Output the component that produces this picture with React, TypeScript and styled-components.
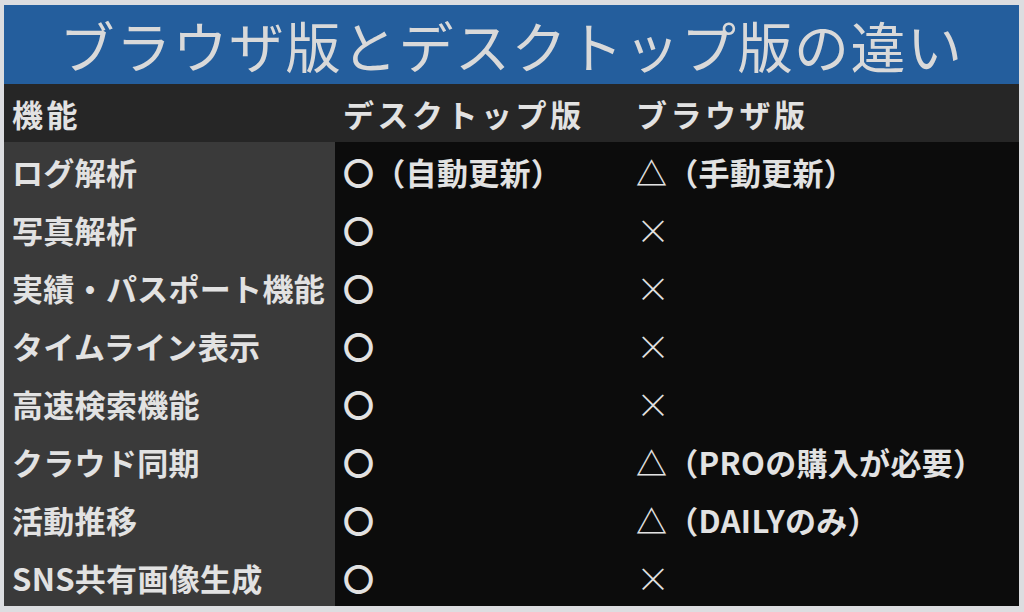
import React from 'react';
import styled, {createGlobalStyle} from 'styled-components';

type Kind = 'header' | 'label' | 'value';

interface Row
{
    feature: string;
    desktop: string;
    browser: string;
}

const ROWS: Row[] = [
    {feature: 'ログ解析', desktop: '〇（自動更新）', browser: '△（手動更新）'},
    {feature: '写真解析', desktop: '〇', browser: '×'},
    {feature: '実績・パスポート機能', desktop: '〇', browser: '×'},
    {feature: 'タイムライン表示', desktop: '〇', browser: '×'},
    {feature: '高速検索機能', desktop: '〇', browser: '×'},
    {feature: 'クラウド同期', desktop: '〇', browser: '△（PROの購入が必要）'},
    {feature: '活動推移', desktop: '〇', browser: '△（DAILYのみ）'},
    {feature: 'SNS共有画像生成', desktop: '〇', browser: '×'},
];

const GlobalStyle = createGlobalStyle`
  html, body {
    margin: 0;
    padding: 0;
    background: #dcdde0;
  }
  body {
    font-family: "Noto Sans CJK JP", "Noto Sans", sans-serif;
  }
`;

const Frame = styled.div`
  width: 1024px;
  height: 612px;
  box-sizing: border-box;
  padding: 5px 5px 6px 4px;
  display: flex;
  flex-direction: column;
`;

const Title = styled.h1`
  margin: 0;
  height: 79px;
  flex: none;
  background: #245e9d;
  color: #d9d9d9;
  font-size: 55px;
  font-weight: 400;
  letter-spacing: 1.5px;
  line-height: 79px;
  text-align: center;
`;

const Table = styled.div`
  flex: 1;
  display: grid;
  grid-template-columns: 331px 293px 1fr;
  grid-auto-rows: 58px;
`;

const BACKGROUNDS: Record<Kind, string> = {
    header: '#262626',
    label: '#3a3a3a',
    value: '#0c0c0c',
};

const Cell = styled.div<{$kind: Kind}>`
  background: ${props => BACKGROUNDS[props.$kind]};
  color: #e2e2e2;
  display: flex;
  align-items: center;
  padding: 0 0 0 8px;
  font-size: 31px;
  font-weight: 700;
  letter-spacing: ${props => props.$kind === 'header' ? '3.5px' : '0.3px'};
  white-space: nowrap;
  overflow: hidden;
`;

// the cross is drawn thin in the original, the circle heavy
const Mark = styled.span<{$thin: boolean}>`
  font-weight: ${props => props.$thin ? 200 : 700};
  font-size: ${props => props.$thin ? '34px' : '31px'};
`;

function renderValue(text: string)
{
    const symbol = text.charAt(0);
    return (
        <>
            <Mark $thin={symbol === '×'}>{symbol}</Mark>
            {text.slice(1)}
        </>
    );
}

export default function App()
{
    return (
        <>
            <GlobalStyle/>
            <Frame>
                <Title>ブラウザ版とデスクトップ版の違い</Title>
                <Table>
                    <Cell $kind="header">機能</Cell>
                    <Cell $kind="header">デスクトップ版</Cell>
                    <Cell $kind="header">ブラウザ版</Cell>
                    {ROWS.map(row => (
                        <React.Fragment key={row.feature}>
                            <Cell $kind="label">{row.feature}</Cell>
                            <Cell $kind="value">{renderValue(row.desktop)}</Cell>
                            <Cell $kind="value">{renderValue(row.browser)}</Cell>
                        </React.Fragment>
                    ))}
                </Table>
            </Frame>
        </>
    );
}
